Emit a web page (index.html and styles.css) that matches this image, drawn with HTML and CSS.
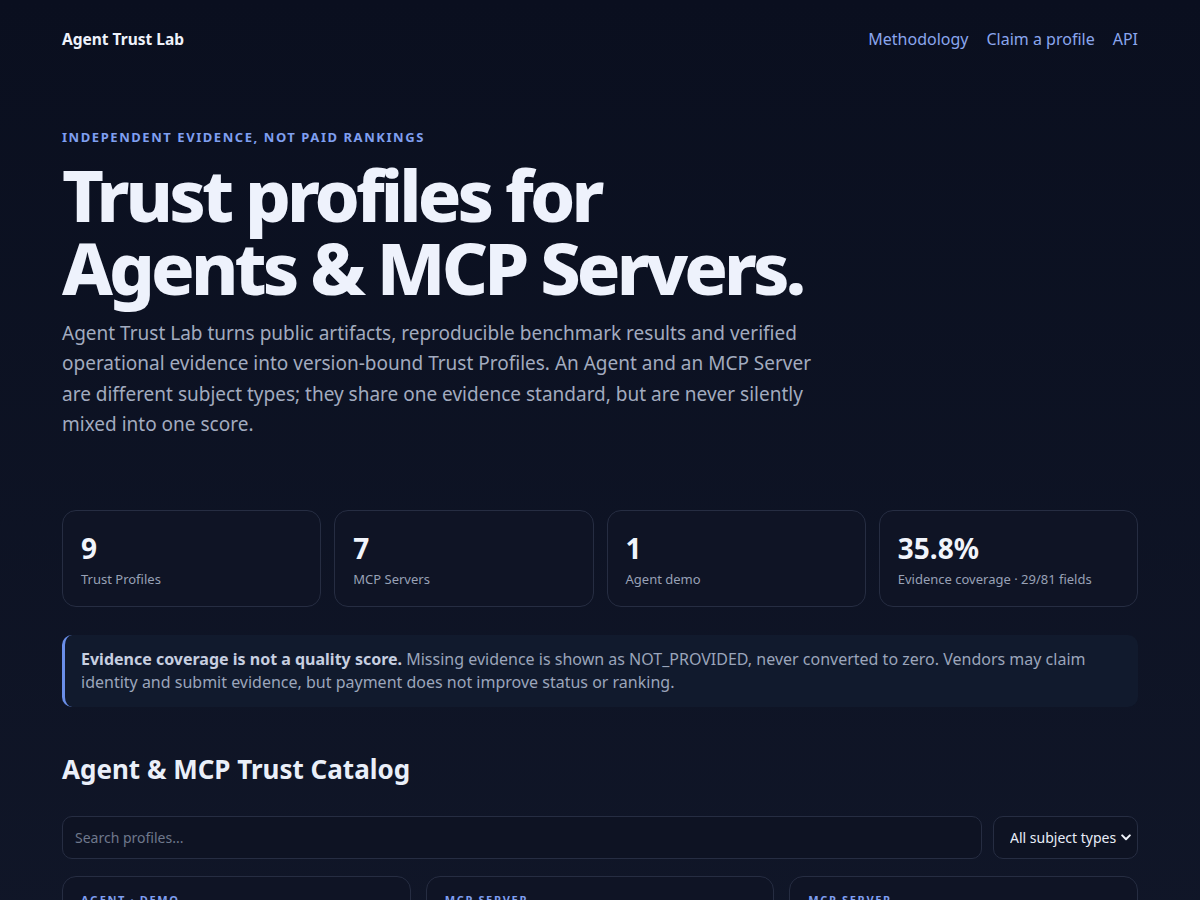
FILE: index.html
```html
<!DOCTYPE html>
<html lang="en">
<head>
    <meta charset="UTF-8">
    <meta name="viewport" content="width=device-width, initial-scale=1.0">
    <title>Agent Trust Lab - Trust profiles for Agents &amp; MCP Servers</title>
    <link rel="stylesheet" href="styles.css">
</head>
<body>

    <div class="wrap">
        <!-- Top bar -->
        <header class="topbar">
            <a class="brand" href="#">Agent Trust Lab</a>
            <nav class="nav">
                <a href="#">Methodology</a>
                <a href="#">Claim a profile</a>
                <a href="#">API</a>
            </nav>
        </header>

        <!-- Hero -->
        <section class="hero">
            <p class="kicker">Independent evidence, not paid rankings</p>
            <h1>Trust profiles for<br>Agents &amp; MCP Servers.</h1>
            <p class="lead">Agent Trust Lab turns public artifacts, reproducible benchmark results and verified operational evidence into version-bound Trust Profiles. An Agent and an MCP Server are different subject types; they share one evidence standard, but are never silently mixed into one score.</p>
        </section>

        <!-- Stats -->
        <section class="stats">
            <div class="stat">
                <div class="stat-num">9</div>
                <div class="stat-label">Trust Profiles</div>
            </div>
            <div class="stat">
                <div class="stat-num">7</div>
                <div class="stat-label">MCP Servers</div>
            </div>
            <div class="stat">
                <div class="stat-num">1</div>
                <div class="stat-label">Agent demo</div>
            </div>
            <div class="stat">
                <div class="stat-num">35.8%</div>
                <div class="stat-label">Evidence coverage · 29/81 fields</div>
            </div>
        </section>

        <div class="note">
            <strong>Evidence coverage is not a quality score.</strong> Missing evidence is shown as NOT_PROVIDED, never converted to zero. Vendors may claim identity and submit evidence, but payment does not improve status or ranking.
        </div>

        <!-- Catalog -->
        <section class="catalog">
            <h2>Agent &amp; MCP Trust Catalog</h2>
            <div class="filters">
                <input class="search" type="text" placeholder="Search profiles...">
                <div class="select-wrap">
                    <select class="type-select">
                        <option>All subject types</option>
                        <option>Agent</option>
                        <option>MCP Server</option>
                    </select>
                    <svg class="chevron" width="10" height="7" viewBox="0 0 10 7">
                        <path d="M1.2 1.4 L5 5.2 L8.8 1.4" fill="none" stroke="#f1f4fb" stroke-width="2" stroke-linecap="round" stroke-linejoin="round"/>
                    </svg>
                </div>
            </div>
            <div class="profile-grid">
                <div class="profile-card">
                    <div class="profile-type">Agent · Demo</div>
                </div>
                <div class="profile-card">
                    <div class="profile-type">MCP Server</div>
                </div>
                <div class="profile-card">
                    <div class="profile-type">MCP Server</div>
                </div>
            </div>
        </section>
    </div>

</body>
</html>
```

FILE: styles.css
```css
/* Global Styles */
* {
    margin: 0;
    padding: 0;
    box-sizing: border-box;
}

html {
    background: #0b1020;
}

body {
    font-family: "Noto Sans", "Open Sans", sans-serif;
    background: linear-gradient(180deg, #0a0f1f 0%, #111729 100%);
    color: #e8edf8;
    min-height: 100vh;
}

a {
    text-decoration: none;
    color: inherit;
}

.wrap {
    max-width: 1076px;
    margin: 0 auto;
}

/* Top bar */
.topbar {
    display: flex;
    justify-content: space-between;
    align-items: center;
    height: 78px;
}

.brand {
    font-weight: 700;
    font-size: 15.5px;
    color: #eef2fb;
}

.nav {
    display: flex;
    gap: 18px;
}

.nav a {
    color: #8aa6ee;
    font-size: 16px;
}

/* Hero */
.hero {
    padding-top: 50px;
}

.kicker {
    color: #7f9ff0;
    font-size: 13px;
    font-weight: 700;
    letter-spacing: 0.12em;
    text-transform: uppercase;
}

.hero h1 {
    font-size: 72px;
    font-weight: 800;
    line-height: 1.02;
    letter-spacing: -0.054em;
    color: #eef2fc;
    margin-top: 12px;
}

.lead {
    max-width: 760px;
    font-size: 19px;
    line-height: 1.6;
    color: #a2abbf;
    margin-top: 13px;
}

/* Stats */
.stats {
    display: grid;
    grid-template-columns: repeat(4, 1fr);
    gap: 13px;
    margin-top: 71px;
}

.stat {
    border: 1px solid #262d42;
    border-radius: 14px;
    background: #0f1425;
    padding: 19px 18px 18px;
    height: 97px;
}

.stat-num {
    font-size: 28px;
    font-weight: 700;
    line-height: 36px;
    color: #f1f4fb;
}

.stat-label {
    font-size: 13px;
    color: #98a1b6;
    margin-top: 4px;
}

/* Note */
.note {
    margin-top: 28px;
    background: #111a2d;
    border-left: 3px solid #6a8ee8;
    border-radius: 10px;
    padding: 13px 18px 13px 16px;
    font-size: 16px;
    line-height: 23px;
    color: #9ba5bb;
}

.note strong {
    color: #c7cfe0;
}

/* Catalog */
.catalog {
    margin-top: 44px;
}

.catalog h2 {
    font-size: 26px;
    font-weight: 700;
    color: #eaeff9;
}

.filters {
    display: flex;
    gap: 11px;
    margin-top: 29px;
}

.search {
    flex: 1;
    height: 43px;
    background: #0e1323;
    border: 1px solid #262d42;
    border-radius: 10px;
    padding: 0 12px;
    font-family: inherit;
    font-size: 14px;
    color: #e8edf8;
    outline: none;
}

.search::placeholder {
    color: #6f788c;
}

.select-wrap {
    position: relative;
    width: 145px;
}

.type-select {
    appearance: none;
    -webkit-appearance: none;
    width: 100%;
    height: 43px;
    background: #0e1323;
    border: 1px solid #262d42;
    border-radius: 10px;
    padding: 0 20px 0 16px;
    font-family: inherit;
    font-size: 14px;
    color: #e8edf8;
}

.chevron {
    position: absolute;
    right: 7px;
    top: 18px;
    pointer-events: none;
}

.profile-grid {
    display: grid;
    grid-template-columns: repeat(3, 1fr);
    gap: 15px;
    margin-top: 17px;
}

.profile-card {
    border: 1px solid #262d42;
    border-radius: 14px;
    background: #0f1425;
    padding: 15px 18px;
    height: 180px;
}

.profile-type {
    font-size: 11px;
    font-weight: 700;
    letter-spacing: 0.15em;
    text-transform: uppercase;
    color: #7f9ff0;
}
```
